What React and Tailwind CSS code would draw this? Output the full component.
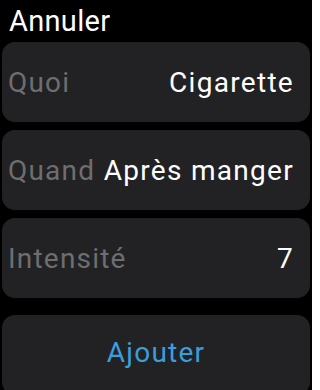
import React from "react";

const font = { fontFamily: "Roboto, 'Noto Sans', sans-serif" };

function Row({ label, value }) {
  return (
    <div className="h-[80px] shrink-0 rounded-[13px] bg-[#222224] flex items-center justify-between pl-[6px] pr-[16px] pt-[2px] gap-[4px]">
      <span className="text-[28px] text-[#6e6e70] tracking-[1.2px] whitespace-nowrap leading-none">{label}</span>
      <span className="text-[28px] text-white tracking-[1.3px] whitespace-nowrap leading-none">{value}</span>
    </div>
  );
}

export default function App() {
  return (
    <div className="w-[312px] h-[390px] bg-black overflow-hidden flex flex-col" style={font}>
      <div className="h-[42px] shrink-0 flex items-center pl-[9px] pt-[1px]">
        <span className="text-[29px] text-white leading-none tracking-[0.3px]">Annuler</span>
      </div>
      <div className="flex flex-col gap-[8px] px-[2px] shrink-0">
        <Row label="Quoi" value="Cigarette" />
        <Row label="Quand" value="Après manger" />
        <Row label="Intensité" value="7" />
      </div>
      <div className="px-[2px] mt-[17px] shrink-0">
        <div className="h-[80px] rounded-[13px] bg-[#222224] flex items-center justify-center pb-[4px]">
          <span className="text-[28px] text-[#3a9ede] tracking-[1.2px] leading-none">Ajouter</span>
        </div>
      </div>
    </div>
  );
}
